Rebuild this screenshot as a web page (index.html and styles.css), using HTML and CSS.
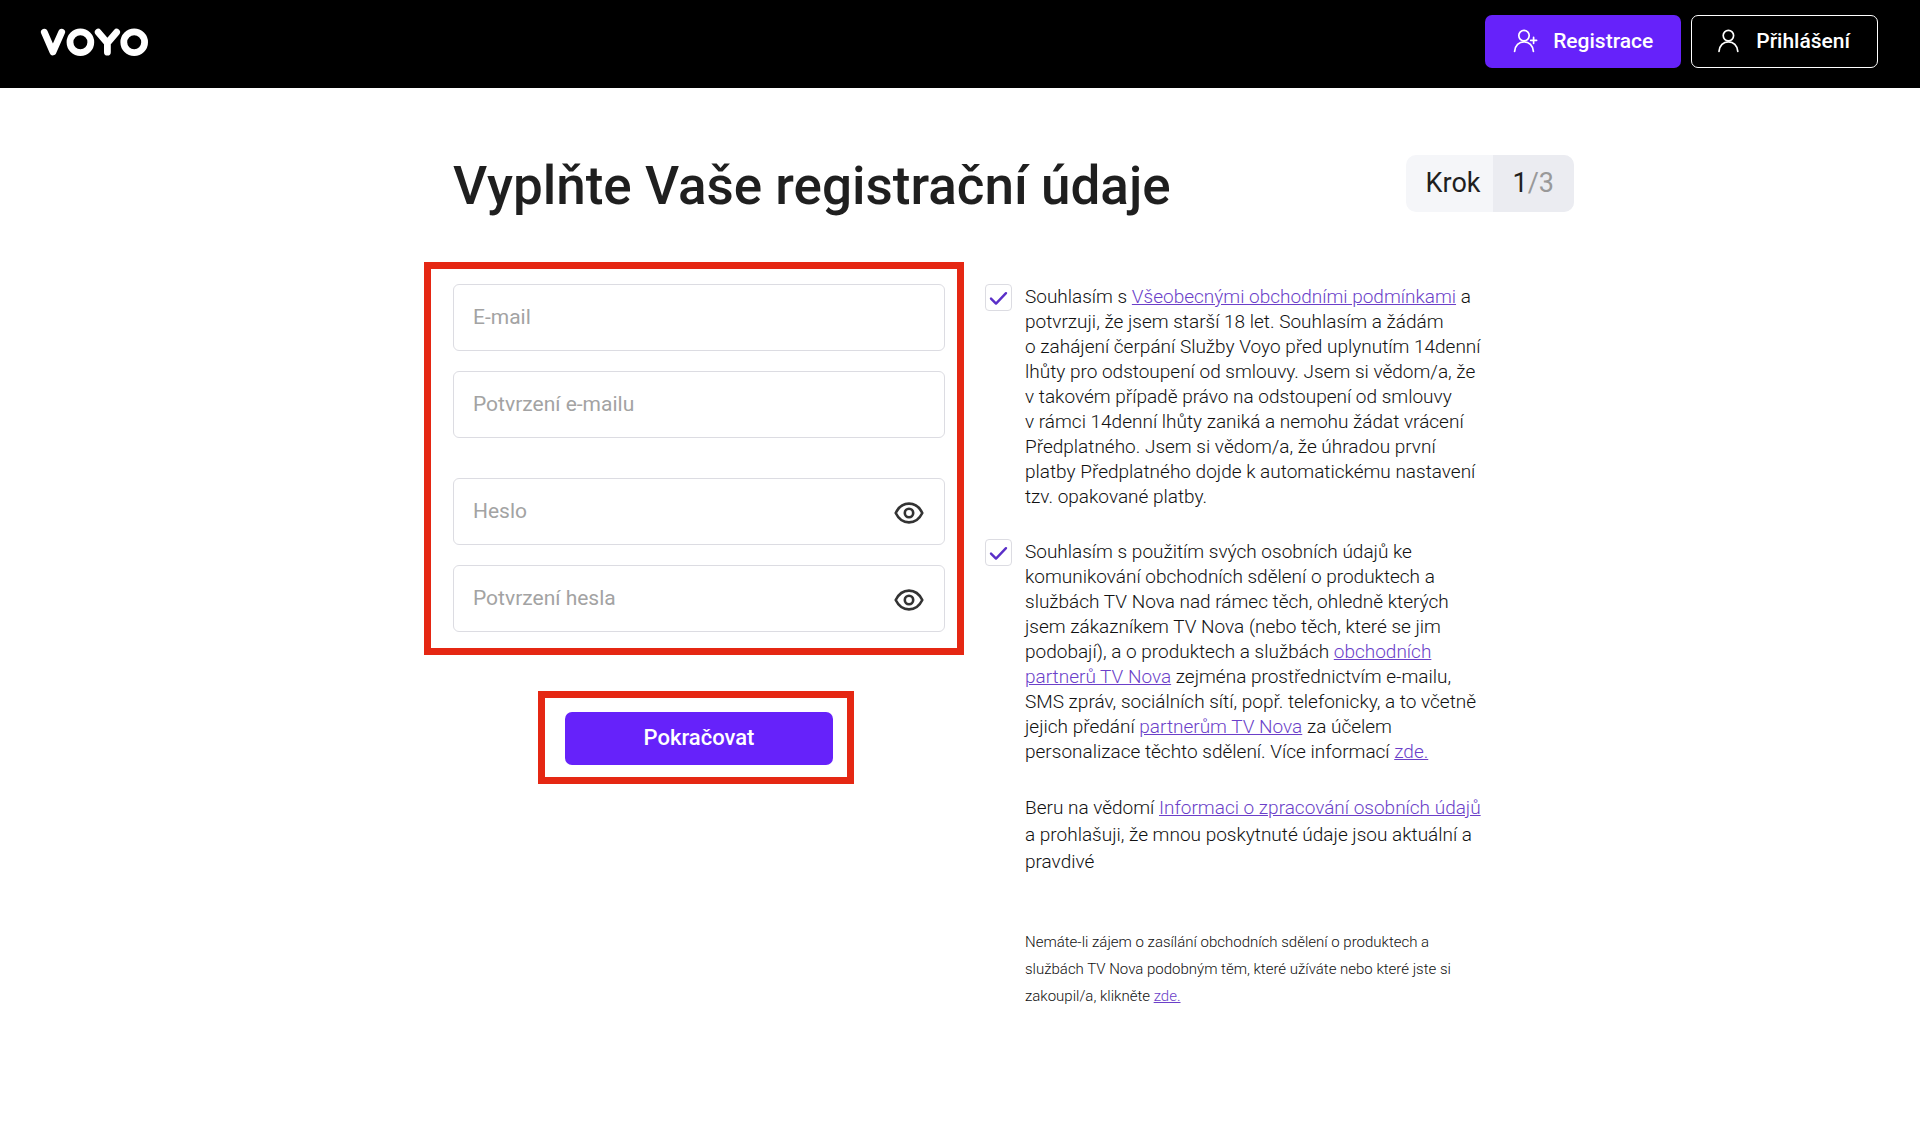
FILE: index.html
```html
<!DOCTYPE html>
<html lang="cs">
<head>
  <meta charset="utf-8">
  <meta name="viewport" content="width=device-width, initial-scale=1">
  <title>Voyo – Registrace</title>
  <link rel="stylesheet" href="styles.css">
</head>
<body>
  <header class="header">
    <a class="logo" href="#" aria-label="Voyo">
      <svg width="108" height="28" viewBox="0 0 108 28" fill="none" stroke="#fff" stroke-linecap="round" stroke-linejoin="round">
        <path stroke-width="6.8" d="M4.3 4.2 12.9 24 21.7 4.2"/>
        <circle stroke-width="6.8" cx="40.4" cy="14.2" r="10.4"/>
        <path stroke-width="6.8" d="M58.2 4.2 67.4 15 76.6 4.2M67.4 15V24.2"/>
        <circle stroke-width="6.8" cx="94.2" cy="14.2" r="10.4"/>
      </svg>
    </a>
    <nav class="account">
      <button class="btn btn-primary" type="button">
        <svg width="25" height="24" viewBox="0 0 25 24" fill="none" stroke="currentColor" stroke-width="1.7" stroke-linecap="round">
          <circle cx="11" cy="6.6" r="5.2"/>
          <path d="M1.6 22.4C2 16.4 6 12.8 11 12.8S20 16.4 20.4 22.4M17.7 11.3H23.6M20.6 8.4V14.3"/>
        </svg>
        Registrace
      </button>
      <button class="btn btn-outline" type="button">
        <svg width="25" height="24" viewBox="0 0 25 24" fill="none" stroke="currentColor" stroke-width="1.7" stroke-linecap="round">
          <circle cx="12.4" cy="6.6" r="5.2"/>
          <path d="M3 22.4C3.4 16.4 7.4 12.8 12.4 12.8S21.4 16.4 21.8 22.4"/>
        </svg>
        Přihlášení
      </button>
    </nav>
  </header>

  <main class="page">
    <div class="heading">
      <h1>Vyplňte Vaše registrační údaje</h1>
      <p class="step"><span class="step-label">Krok</span><span class="step-count">1<span class="step-total">/3</span></span></p>
    </div>

    <form class="form">
      <div class="credentials">
        <div class="fields">
          <div class="field"><input type="email" aria-label="E-mail" placeholder="E-mail"></div>
          <div class="field"><input type="email" aria-label="Potvrzení e-mailu" placeholder="Potvrzení e-mailu"></div>
          <div class="field field-spaced">
            <input type="password" aria-label="Heslo" placeholder="Heslo">
            <button class="reveal" type="button" aria-label="Zobrazit heslo">
              <svg width="30" height="24" viewBox="0 0 30 24" fill="none" stroke="#333" stroke-width="2.6" stroke-linejoin="round">
                <path d="M1.7 12C4.6 6 9 2.6 15 2.6S25.400 6 28.3 12C25.4 18 21 21.4 15 21.4S4.6 18 1.7 12Z"/>
                <circle cx="15" cy="12" r="4.2"/>
              </svg>
            </button>
          </div>
          <div class="field">
            <input type="password" aria-label="Potvrzení hesla" placeholder="Potvrzení hesla">
            <button class="reveal" type="button" aria-label="Zobrazit potvrzení hesla">
              <svg width="30" height="24" viewBox="0 0 30 24" fill="none" stroke="#333" stroke-width="2.6" stroke-linejoin="round">
                <path d="M1.7 12C4.6 6 9 2.6 15 2.6S25.400 6 28.3 12C25.4 18 21 21.4 15 21.4S4.6 18 1.7 12Z"/>
                <circle cx="15" cy="12" r="4.2"/>
              </svg>
            </button>
          </div>
        </div>
        <div class="submit">
          <button class="btn btn-primary btn-submit" type="submit">Pokračovat</button>
        </div>
      </div>

      <div class="consents">
        <div class="consent">
          <span class="tick">
            <input type="checkbox" id="terms" checked>
            <svg width="27" height="27" viewBox="0 0 27 27" fill="none" stroke="#5a2fc8" stroke-width="2.4" stroke-linecap="round" stroke-linejoin="round"><path d="M6 14.6 11 19.6 21 9.2"/></svg>
          </span>
          <label for="terms">Souhlasím s <a href="#">Všeobecnými obchodními podmínkami</a> a potvrzuji, že jsem starší 18 let. Souhlasím a žádám o&nbsp;zahájení čerpání Služby Voyo před uplynutím 14denní lhůty pro odstoupení od smlouvy. Jsem si vědom/a, že v&nbsp;takovém případě právo na odstoupení od smlouvy v&nbsp;rámci 14denní lhůty zaniká a nemohu žádat vrácení Předplatného. Jsem si vědom/a, že úhradou první platby Předplatného dojde k automatickému nastavení tzv.&nbsp;opakované platby.</label>
        </div>
        <div class="consent">
          <span class="tick">
            <input type="checkbox" id="marketing" checked>
            <svg width="27" height="27" viewBox="0 0 27 27" fill="none" stroke="#5a2fc8" stroke-width="2.4" stroke-linecap="round" stroke-linejoin="round"><path d="M6 14.6 11 19.6 21 9.2"/></svg>
          </span>
          <label for="marketing">Souhlasím s použitím svých osobních údajů ke komunikování obchodních sdělení o produktech a službách TV Nova nad rámec těch, ohledně kterých jsem zákazníkem TV Nova (nebo těch, které se jim podobají), a o produktech a službách <a href="#">obchodních partnerů TV Nova</a> zejména prostřednictvím e-mailu, SMS zpráv, sociálních sítí, popř. telefonicky, a to včetně jejich předání <a href="#">partnerům TV Nova</a> za účelem personalizace těchto sdělení. Více informací <a href="#">zde.</a></label>
        </div>
        <p class="notice">Beru na vědomí <a href="#">Informaci o zpracování osobních údajů</a> a&nbsp;prohlašuji, že mnou poskytnuté údaje jsou aktuální a pravdivé</p>
        <p class="notice notice-small">Nemáte-li zájem o zasílání obchodních sdělení o produktech a službách TV Nova podobným těm, které užíváte nebo které jste si zakoupil/a, klikněte <a href="#">zde.</a></p>
      </div>
    </form>
  </main>
</body>
</html>
```
FILE: styles.css
```css
* {
  box-sizing: border-box;
}

body {
  margin: 0;
  background: #fff;
  color: #1f1f1f;
  font-family: Roboto, "Liberation Sans", sans-serif;
}

h1,
p {
  margin: 0;
}

button,
input {
  font-family: inherit;
}

a {
  color: #6b3fc9;
}

.header {
  display: flex;
  align-items: center;
  justify-content: space-between;
  padding: 15px 42px 20px 40px;
  background: #000;
}

.logo svg,
.btn svg,
.reveal svg {
  display: block;
}

.account {
  display: flex;
  gap: 10px;
}

.btn {
  display: flex;
  align-items: center;
  justify-content: center;
  gap: 15px;
  height: 53px;
  padding: 0 28px 2px;
  border: 0;
  border-radius: 7px;
  color: #fff;
  font-size: 21px;
  font-weight: 500;
}

.btn-primary {
  background: #6622fa;
}

.btn-outline {
  padding: 0 27px 2px 24px;
  border: 1px solid #fff;
  background: transparent;
}

.page {
  max-width: 1228px;
  margin: 0 auto;
  padding: 67px 0 40px 78px;
}

.heading {
  display: flex;
  align-items: flex-start;
  justify-content: space-between;
  padding-left: 29px;
}

h1 {
  font-size: 53px;
  font-weight: 500;
  line-height: 62px;
}

.step {
  display: flex;
  overflow: hidden;
  border-radius: 10px;
  background: #f5f6f9;
  font-size: 27px;
  line-height: 57px;
}

.step-label {
  padding: 0 13px 0 20px;
}

.step-count {
  padding: 0 20px 0 19px;
  background: #ebecf1;
}

.step-total {
  color: #999;
}

.form {
  display: flex;
  flex-wrap: wrap;
  gap: 21px;
  margin-top: 45px;
}

.credentials {
  flex: 0 1 540px;
}

.fields {
  display: grid;
  gap: 20px;
  padding: 15px 12px 16px 22px;
  border: 7px solid #e52713;
}

.field {
  display: flex;
  align-items: center;
  height: 67px;
  border: 1px solid #dcdce2;
  border-radius: 6px;
}

.field-spaced {
  margin-top: 20px;
}

.field input {
  flex: 1;
  min-width: 0;
  height: 100%;
  padding: 0 19px 2px;
  border: 0;
  background: transparent;
  font-size: 21px;
}

.field input::placeholder {
  color: #a3a3a3;
  opacity: 1;
}

.reveal {
  margin-right: 20px;
  padding: 3px 0 0;
  border: 0;
  background: transparent;
}

.submit {
  width: fit-content;
  margin: 36px 0 0 114px;
  padding: 14px 14px 12px 20px;
  border: 7px solid #e52713;
}

.btn-submit {
  width: 268px;
  font-size: 22px;
}

.consents {
  flex: 0 1 500px;
  padding-top: 22px;
  color: #111;
  font-size: 19px;
  font-weight: 300;
  line-height: 25px;
}

.consent {
  display: flex;
  gap: 13px;
  margin-bottom: 30px;
}

.consent label {
  flex: 1;
}

.tick {
  display: grid;
  height: 27px;
}

.tick input,
.tick svg {
  grid-area: 1 / 1;
}

.tick input {
  width: 27px;
  height: 27px;
  margin: 0;
  appearance: none;
  border: 1px solid #dcdce2;
  border-radius: 4px;
}

.tick svg {
  pointer-events: none;
}

.notice {
  padding-left: 40px;
  line-height: 27px;
}

.notice-small {
  margin-top: 54px;
  font-size: 15px;
}
```
